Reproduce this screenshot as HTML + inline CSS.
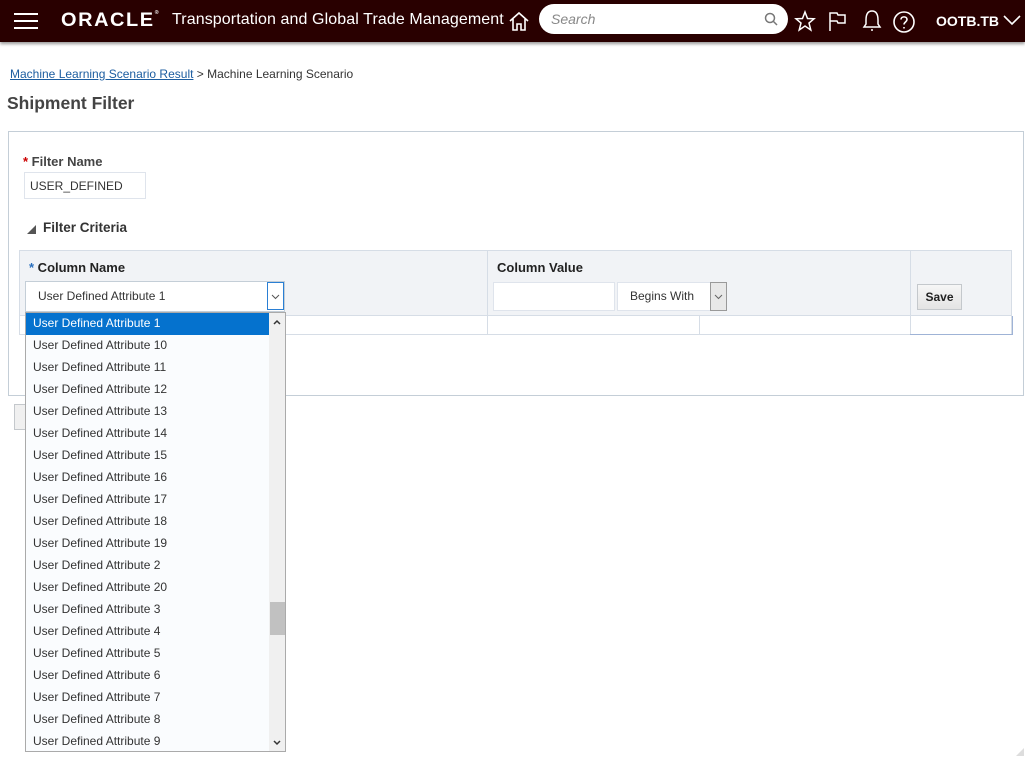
<!DOCTYPE html><html><head><style>
body{margin:0;width:1025px;height:757px;background:#fff;font-family:"Liberation Sans",Arial,sans-serif;position:relative;overflow:hidden}
.a{position:absolute}
.hdr{left:0;top:0;width:1025px;height:42px;background:#290000;box-shadow:0 2px 3px #999}
.w{color:#fff}
.it{left:0;width:236px;height:22px;line-height:21px;padding-left:7px;font-size:12px;color:#333}
</style></head><body>
<div class="a hdr">
 <div class="a" style="left:14px;top:13px;width:24px;height:2px;background:#fff;box-shadow:0 7px 0 #fff,0 14px 0 #fff"></div>
 <div class="a w" style="left:61px;top:10px;font-size:19px;letter-spacing:1.5px;font-weight:bold;transform:scaleX(1.05);transform-origin:left">ORACLE<span style="font-size:5px;vertical-align:top">®</span></div>
 <div class="a w" style="left:172px;top:11px;font-size:16px;letter-spacing:0.1px">Transportation and Global Trade Management</div>
 <svg class="a" style="left:508px;top:10px" width="22" height="22" viewBox="0 0 22 22" fill="none" stroke="#fff" stroke-width="1.6"><path d="M2 11 L11 3 L20 11 M5 9 V20 H9 V14 H13 V20 H17 V9"/></svg>
 <div class="a" style="left:539px;top:4px;width:249px;height:30px;border-radius:15px;background:#fff"><span class="a" style="left:12px;top:7px;font-size:14px;font-style:italic;color:#888">Search</span>
 <svg class="a" style="left:225px;top:8px" width="14" height="14" fill="none" stroke="#777" stroke-width="1.5"><circle cx="6" cy="6" r="4.5"/><path d="M9.5 9.5 L13 13"/></svg></div>
 <svg class="a" style="left:794px;top:10px" width="22" height="22" fill="none" stroke="#fff" stroke-width="1.5"><path d="M11 2 L13.5 8.5 L20 8.8 L15 13 L16.8 20 L11 16 L5.2 20 L7 13 L2 8.8 L8.5 8.5Z"/></svg>
 <svg class="a" style="left:828px;top:10px" width="20" height="22" fill="none" stroke="#fff" stroke-width="1.5"><path d="M2 21 V3 H9 L10 5 H17 V13 H10 L9 11 H2"/></svg>
 <svg class="a" style="left:861px;top:8px" width="22" height="26" fill="none" stroke="#fff" stroke-width="1.5"><path d="M11 3 C6 3 5 8 5 12 V16 L3 19 H19 L17 16 V12 C17 8 16 3 11 3Z M10 22 H12"/></svg>
 <svg class="a" style="left:892px;top:10px" width="24" height="24" fill="none" stroke="#fff" stroke-width="1.6"><circle cx="12" cy="12" r="10"/><path d="M9 9.5 C9 6 15 6 15 9.5 C15 12 12 12 12 14.5 M12 17 V18.5"/></svg>
 <div class="a w" style="left:936px;top:13px;font-size:14px;font-weight:bold">OOTB.TB</div>
 <svg class="a" style="left:1002px;top:13px" width="20" height="14" fill="none" stroke="#fff" stroke-width="1.6"><path d="M2 3 L10 11 L18 3"/></svg>
</div>
<div class="a" style="left:10px;top:67px;font-size:12px;color:#333"><span style="color:#1c5da0;text-decoration:underline">Machine Learning Scenario Result</span> &gt; Machine Learning Scenario</div>
<div class="a" style="left:7px;top:93px;font-size:17.5px;font-weight:bold;color:#444">Shipment Filter</div>
<div class="a" style="left:8px;top:131px;width:1014px;height:263px;border:1px solid #c4ced7"></div>
<div class="a" style="left:23px;top:154px;font-size:13px;font-weight:bold;color:#444"><span style="color:#c00">*</span> Filter Name</div>
<div class="a" style="left:24px;top:172px;height:27px;border:1px solid #dfe4ec;font-size:12px;line-height:27px;padding-left:5px;box-sizing:border-box;width:122px;color:#333">USER_DEFINED</div>
<div class="a" style="left:27px;top:225px;width:0;height:0;border-left:9px solid transparent;border-bottom:9px solid #555"></div>
<div class="a" style="left:43px;top:220px;font-size:13.5px;font-weight:bold;color:#333">Filter Criteria</div>
<div class="a" style="left:19px;top:250px;width:993px;height:66px;background:#f1f3f6;border:1px solid #d6dde6;box-sizing:border-box"></div>
<div class="a" style="left:487px;top:250px;width:1px;height:85px;background:#d6dde6"></div>
<div class="a" style="left:910px;top:250px;width:1px;height:85px;background:#d6dde6"></div>
<div class="a" style="left:699px;top:316px;width:1px;height:19px;background:#d6dde6"></div>
<div class="a" style="left:19px;top:316px;width:993px;height:19px;border:1px solid #d6dde6;border-top:none;box-sizing:border-box"></div>
<div class="a" style="left:910px;top:316px;width:103px;height:19px;border-bottom:1px solid #9fb3d6;border-right:1px solid #9fb3d6;box-sizing:border-box"></div>
<div class="a" style="left:29px;top:260px;font-size:13px;font-weight:bold;color:#222"><span style="color:#2a6fbd">*</span> Column Name</div>
<div class="a" style="left:497px;top:260px;font-size:13px;font-weight:bold;color:#222">Column Value</div>
<div class="a" style="left:25px;top:281px;width:260px;height:31px;background:#fff;border:1px solid #c4ced7;box-sizing:border-box;font-size:12px;line-height:29px;padding-left:12px;color:#333">User Defined Attribute 1</div>
<div class="a" style="left:267px;top:282px;width:17px;height:28px;border:1px solid #2a7fd4;box-sizing:border-box;background:#fff"><svg width="15" height="26"><path d="M4 12 L7.5 15.5 L11 12" fill="none" stroke="#555"/></svg></div>
<div class="a" style="left:493px;top:282px;width:122px;height:29px;background:#fff;border:1px solid #dfe4ec;box-sizing:border-box"></div>
<div class="a" style="left:617px;top:282px;width:110px;height:29px;background:#fff;border:1px solid #dfe4ec;box-sizing:border-box;font-size:12px;line-height:27px;padding-left:12px;color:#333">Begins With</div>
<div class="a" style="left:710px;top:282px;width:17px;height:29px;border:1px solid #999;box-sizing:border-box;background:#e8e8e8"><svg width="15" height="27"><path d="M4 12 L7.5 15.5 L11 12" fill="none" stroke="#666"/></svg></div>
<div class="a" style="left:917px;top:284px;width:45px;height:26px;border:1px solid #c4c8cc;background:linear-gradient(#f6f6f6,#e4e4e4);box-sizing:border-box;font-size:12px;font-weight:bold;line-height:24px;text-align:center;color:#222">Save</div>
<div class="a" style="left:14px;top:404px;width:14px;height:26px;border:1px solid #c4c8cc;background:#f0f0f0;box-sizing:border-box"></div>
<div class="a" style="left:1016px;top:748px;width:0;height:0;border-left:8px solid transparent;border-bottom:8px solid #ddd"></div>
<div class="a" style="left:25px;top:312px;width:261px;height:440px;background:#fafcfe;border:1px solid #aaa;box-sizing:border-box">
<div class="a" style="left:243px;top:0;width:16px;height:438px;background:#f0f0f0"></div>
<svg class="a" style="left:243px;top:2px" width="16" height="14"><path d="M5 9 L8 6 L11 9" fill="none" stroke="#333" stroke-width="1.5"/></svg>
<svg class="a" style="left:243px;top:423px" width="16" height="14"><path d="M5 5 L8 8 L11 5" fill="none" stroke="#333" stroke-width="1.5"/></svg>
<div class="a" style="left:244px;top:289px;width:15px;height:33px;background:#c1c1c1"></div>
<div class="a it" style="top:0;background:#0572ce;color:#fff">User Defined Attribute 1</div>
<div class="a it" style="top:22px">User Defined Attribute 10</div>
<div class="a it" style="top:44px">User Defined Attribute 11</div>
<div class="a it" style="top:66px">User Defined Attribute 12</div>
<div class="a it" style="top:88px">User Defined Attribute 13</div>
<div class="a it" style="top:110px">User Defined Attribute 14</div>
<div class="a it" style="top:132px">User Defined Attribute 15</div>
<div class="a it" style="top:154px">User Defined Attribute 16</div>
<div class="a it" style="top:176px">User Defined Attribute 17</div>
<div class="a it" style="top:198px">User Defined Attribute 18</div>
<div class="a it" style="top:220px">User Defined Attribute 19</div>
<div class="a it" style="top:242px">User Defined Attribute 2</div>
<div class="a it" style="top:264px">User Defined Attribute 20</div>
<div class="a it" style="top:286px">User Defined Attribute 3</div>
<div class="a it" style="top:308px">User Defined Attribute 4</div>
<div class="a it" style="top:330px">User Defined Attribute 5</div>
<div class="a it" style="top:352px">User Defined Attribute 6</div>
<div class="a it" style="top:374px">User Defined Attribute 7</div>
<div class="a it" style="top:396px">User Defined Attribute 8</div>
<div class="a it" style="top:418px">User Defined Attribute 9</div>
</div>
</body></html>
